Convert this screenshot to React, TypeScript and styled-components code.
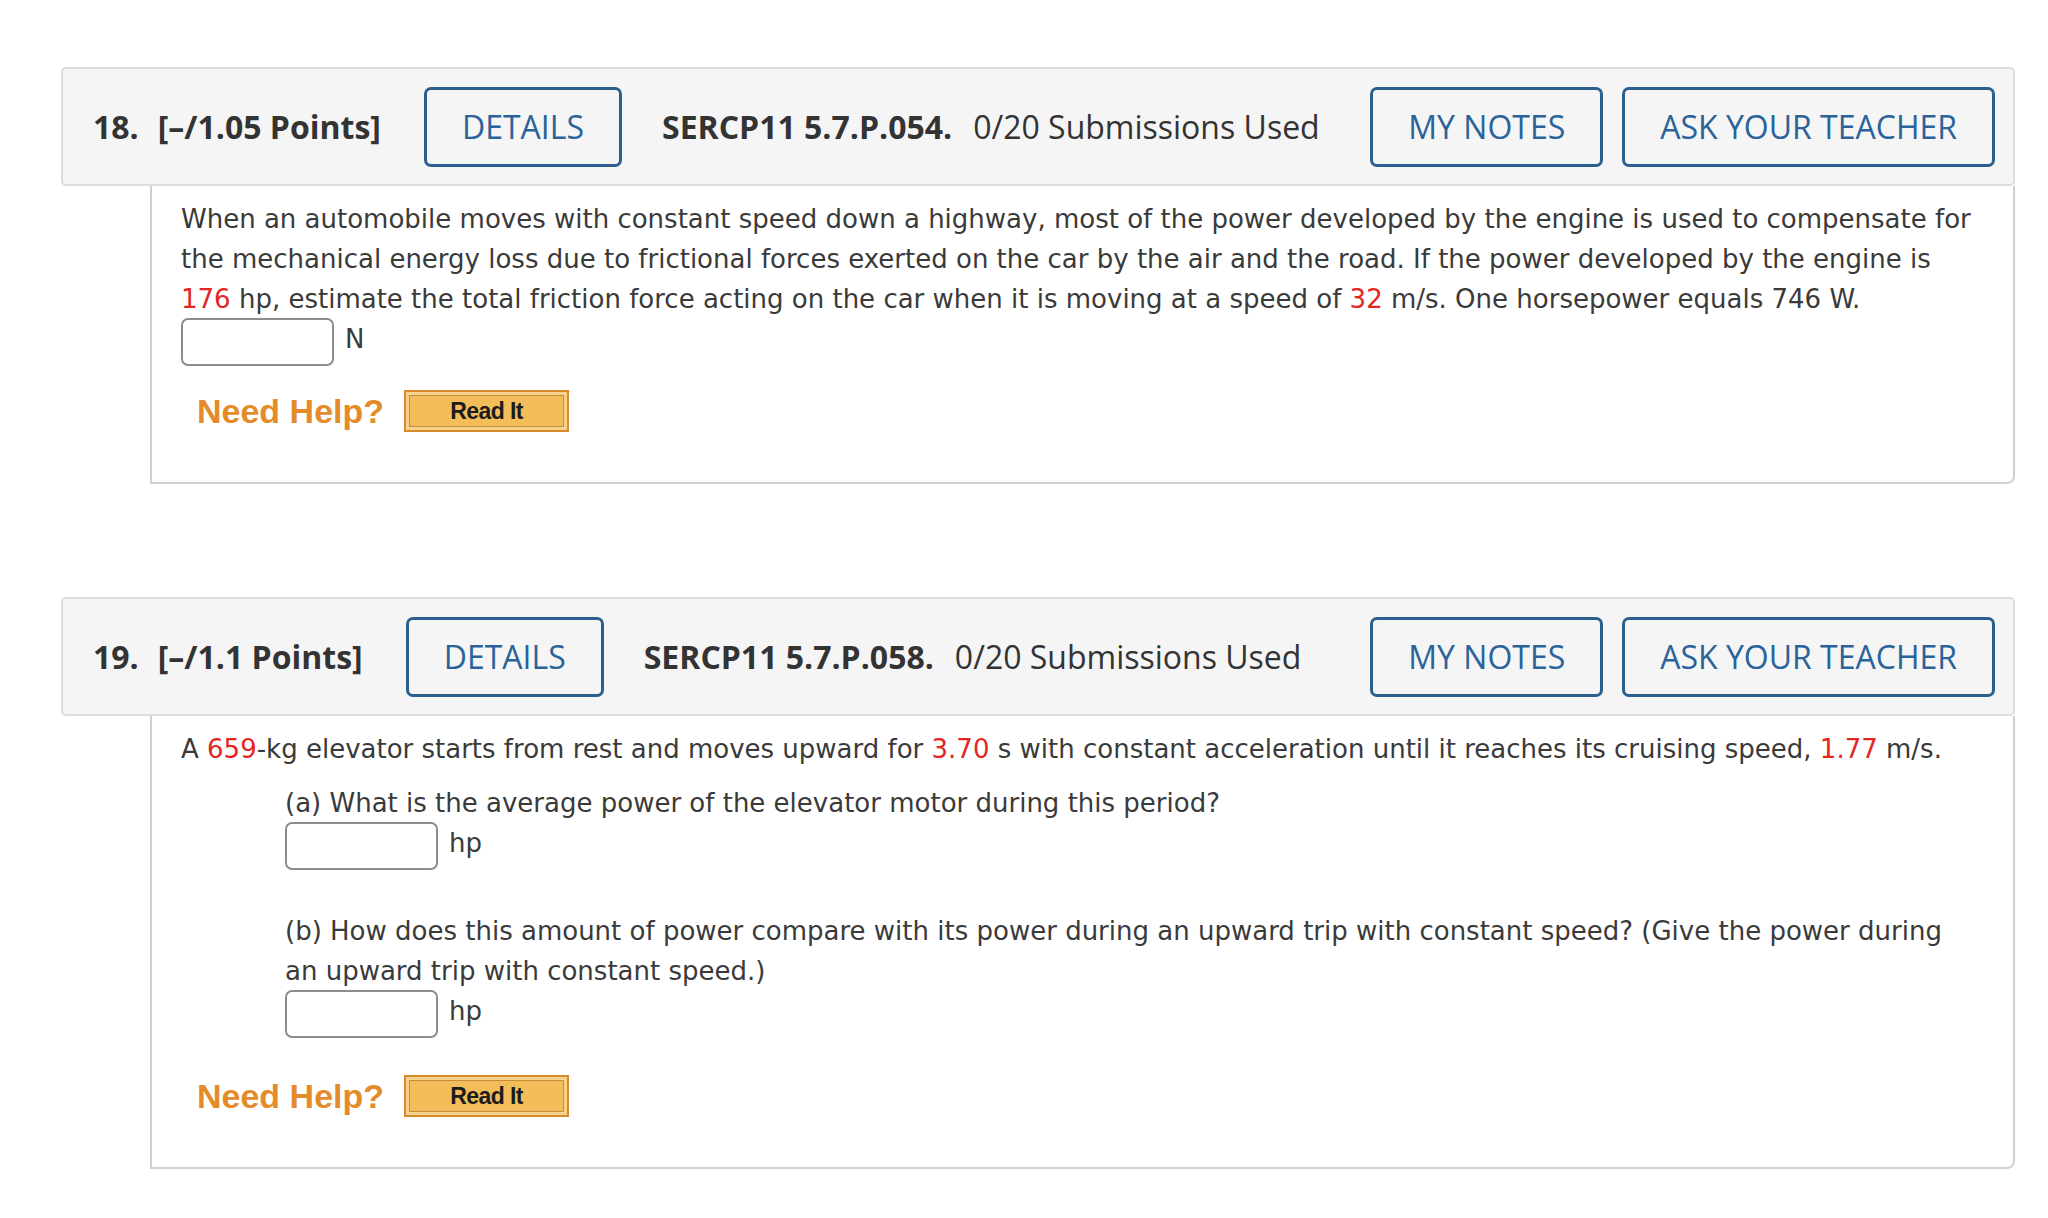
import React from 'react';
import styled, { createGlobalStyle } from 'styled-components';

const GlobalStyle = createGlobalStyle`
  html, body {
    margin: 0;
    padding: 0;
    background: #ffffff;
  }
  body {
    font-family: "DejaVu Sans", Verdana, sans-serif;
    color: #333333;
  }
`;

const Page = styled.div`
  display: flex;
  flex-direction: column;
  gap: 113px;
  width: 1954px;
  padding: 67px 0 0 61px;
`;

const Question = styled.section`
  display: flex;
  flex-direction: column;
`;

const Header = styled.div`
  display: flex;
  flex-direction: row;
  align-items: center;
  height: 119px;
  box-sizing: border-box;
  padding: 0 18px 0 30px;
  background: #f5f5f5;
  border: 2px solid #dddddd;
  border-radius: 5px;
  font-family: "Open Sans", "Liberation Sans", sans-serif;
  font-size: 32px;
  color: #333333;
`;

const Number = styled.span`
  font-weight: 700;
  margin-right: 19px;
`;

const Points = styled.span`
  font-weight: 700;
  margin-right: 43px;
`;

const Code = styled.span`
  font-weight: 700;
  margin-left: 40px;
  margin-right: 21px;
`;

const Submissions = styled.span`
  font-weight: 400;
`;

const Actions = styled.div`
  display: flex;
  gap: 19px;
  margin-left: auto;
`;

const HeaderButton = styled.button`
  height: 80px;
  box-sizing: border-box;
  padding: 0 35px;
  background: transparent;
  border: 3px solid #2c5f8e;
  border-radius: 7px;
  font-family: "Open Sans", "Liberation Sans", sans-serif;
  font-size: 32px;
  font-weight: 400;
  color: #2a6399;
  cursor: pointer;
`;

const Body = styled.div`
  margin-left: 89px;
  padding: 13px 38px 50px 29px;
  border: 2px solid #d0d0d0;
  border-top: none;
  border-bottom-right-radius: 8px;
  font-size: 26px;
  line-height: 40px;
  color: #3a3a3a;
`;

const Text = styled.div``;

const Red = styled.span`
  color: #e3261f;
`;

const Part = styled.div<{ $top: number }>`
  margin-left: 104px;
  margin-top: ${p => p.$top}px;
`;

const AnswerRow = styled.div`
  display: flex;
  align-items: flex-start;
  gap: 11px;
`;

const AnswerInput = styled.input`
  width: 153px;
  height: 48px;
  box-sizing: border-box;
  margin: -1px 0 0 0;
  border: 2px solid #8c8c8c;
  border-radius: 7px;
  background: #ffffff;
`;

const Unit = styled.span`
  line-height: 40px;
`;

const HelpRow = styled.div<{ $top: number }>`
  display: flex;
  align-items: center;
  gap: 20px;
  margin-top: ${p => p.$top}px;
  margin-left: 16px;
`;

const NeedHelp = styled.span`
  font-family: "Liberation Sans", Arial, sans-serif;
  font-weight: 700;
  font-size: 34px;
  line-height: 42px;
  color: #e58c2a;
`;

const ReadIt = styled.button`
  width: 165px;
  height: 42px;
  box-sizing: border-box;
  padding: 0;
  border: 2px solid #d98a2c;
  background: #f3be5a;
  box-shadow: inset 0 0 0 3px #f7d28e, inset 0 0 0 4px #c58e3a;
  font-family: "Liberation Sans", Arial, sans-serif;
  font-weight: 700;
  font-size: 23px;
  letter-spacing: -0.6px;
  color: #1c1c1c;
  cursor: pointer;
`;

interface HeadProps {
  num: string
  points: string
  code: string
}

const QuestionHeader = ({ num, points, code }: HeadProps) => (
  <Header>
    <Number>{num}</Number>
    <Points>{points}</Points>
    <HeaderButton>DETAILS</HeaderButton>
    <Code>{code}</Code>
    <Submissions>0/20 Submissions Used</Submissions>
    <Actions>
      <HeaderButton>MY NOTES</HeaderButton>
      <HeaderButton>ASK YOUR TEACHER</HeaderButton>
    </Actions>
  </Header>
);

const Answer = ({ unit }: { unit: string }) => (
  <AnswerRow>
    <AnswerInput type="text" />
    <Unit>{unit}</Unit>
  </AnswerRow>
);

const Help = ({ top }: { top: number }) => (
  <HelpRow $top={top}>
    <NeedHelp>Need Help?</NeedHelp>
    <ReadIt>Read It</ReadIt>
  </HelpRow>
);

export default function App() {
  return (
    <>
      <GlobalStyle />
      <Page>
        <Question>
          <QuestionHeader num="18." points="[–/1.05 Points]" code="SERCP11 5.7.P.054." />
          <Body>
            <Text>
              When an automobile moves with constant speed down a highway, most of the power developed by the engine is used to compensate for
              the mechanical energy loss due to frictional forces exerted on the car by the air and the road. If the power developed by the engine is{' '}
              <Red>176</Red> hp, estimate the total friction force acting on the car when it is moving at a speed of <Red>32</Red> m/s. One horsepower equals 746 W.
            </Text>
            <Answer unit="N" />
            <Help top={24} />
          </Body>
        </Question>

        <Question>
          <QuestionHeader num="19." points="[–/1.1 Points]" code="SERCP11 5.7.P.058." />
          <Body>
            <Text>
              A <Red>659</Red>-kg elevator starts from rest and moves upward for <Red>3.70</Red> s with constant acceleration until it reaches its cruising speed, <Red>1.77</Red> m/s.
            </Text>
            <Part $top={14}>
              <Text>(a) What is the average power of the elevator motor during this period?</Text>
              <Answer unit="hp" />
            </Part>
            <Part $top={41}>
              <Text>
                (b) How does this amount of power compare with its power during an upward trip with constant speed? (Give the power during
                an upward trip with constant speed.)
              </Text>
              <Answer unit="hp" />
            </Part>
            <Help top={37} />
          </Body>
        </Question>
      </Page>
    </>
  );
}
